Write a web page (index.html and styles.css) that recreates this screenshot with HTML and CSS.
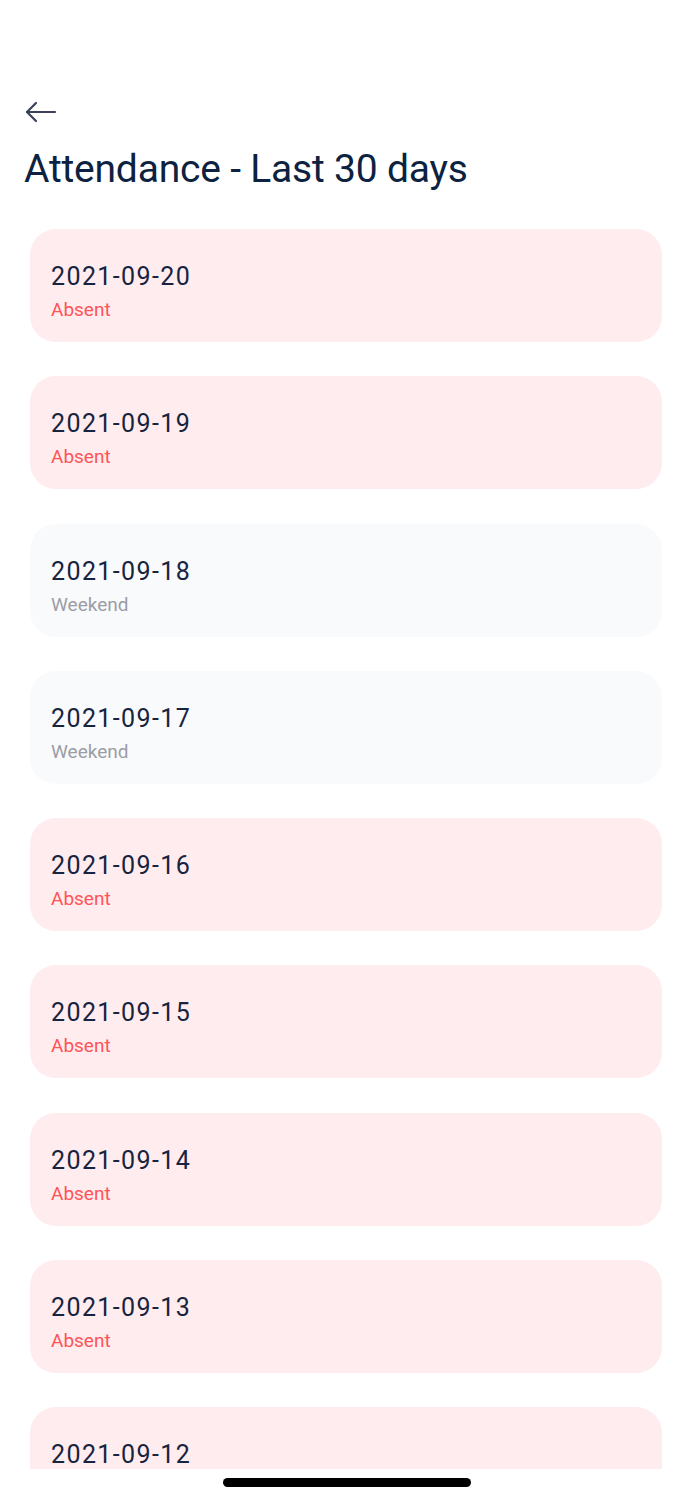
FILE: index.html
```html
<!DOCTYPE html>
<html>
<head>
<meta charset="utf-8">
<link rel="stylesheet" href="styles.css">
</head>
<body>
<div class="screen">
  <div class="viewport">
    <header class="header">
      <button class="back" aria-label="Back">
        <svg width="32" height="22" viewBox="0 0 32 22" fill="none" stroke="#3b4157" stroke-width="2.2" stroke-linecap="round" stroke-linejoin="round">
          <path d="M2 11 H30"/>
          <path d="M11 2 L2 11 L11 20"/>
        </svg>
      </button>
      <h1 class="title">Attendance - Last 30 days</h1>
    </header>
    <ul class="list">
      <li class="card absent"><div class="date">2021-09-20</div><div class="status">Absent</div></li>
      <li class="card absent"><div class="date">2021-09-19</div><div class="status">Absent</div></li>
      <li class="card weekend"><div class="date">2021-09-18</div><div class="status">Weekend</div></li>
      <li class="card weekend"><div class="date">2021-09-17</div><div class="status">Weekend</div></li>
      <li class="card absent"><div class="date">2021-09-16</div><div class="status">Absent</div></li>
      <li class="card absent"><div class="date">2021-09-15</div><div class="status">Absent</div></li>
      <li class="card absent"><div class="date">2021-09-14</div><div class="status">Absent</div></li>
      <li class="card absent"><div class="date">2021-09-13</div><div class="status">Absent</div></li>
      <li class="card absent"><div class="date">2021-09-12</div><div class="status">Absent</div></li>
    </ul>
  </div>
  <div class="home-bar"></div>
</div>
</body>
</html>
```
FILE: styles.css
```css
* { box-sizing: border-box; }
html, body { margin: 0; padding: 0; background: #ffffff; }
body { font-family: Roboto, "Noto Sans", sans-serif; }
.screen { width: 693px; height: 1500px; display: flex; flex-direction: column; }
.viewport { height: 1469px; overflow: hidden; }
.header { padding: 100px 0 0 24px; }
.back { display: block; border: 0; background: none; padding: 0; margin: 0 0 0 1px; width: 32px; height: 24px; }
.back svg { display: block; }
.title {
  margin: 20px 0 0 0;
  font-size: 39px;
  line-height: 50px;
  font-weight: 400;
  color: #0d2240;
  letter-spacing: -0.2px;
}
.list { list-style: none; margin: 0; padding: 0 31px 0 30px; display: flex; flex-direction: column; gap: 34.3px; margin-top: 35px; }
.card {
  height: 113px;
  border-radius: 26px;
  padding: 33px 21px 0 21px;
}
.card.absent { background: #ffecee; }
.card.weekend { background: #f9fafc; }
.date { font-size: 25px; line-height: 30px; color: #172440; letter-spacing: 1.4px; }
.status { font-size: 19px; line-height: 24px; margin-top: 6px; }
.absent .status { color: #ff5457; }
.weekend .status { color: #9b9da6; }
.home-bar { width: 248px; height: 9px; border-radius: 5px; background: #000; margin: 9px auto 0; }
```
